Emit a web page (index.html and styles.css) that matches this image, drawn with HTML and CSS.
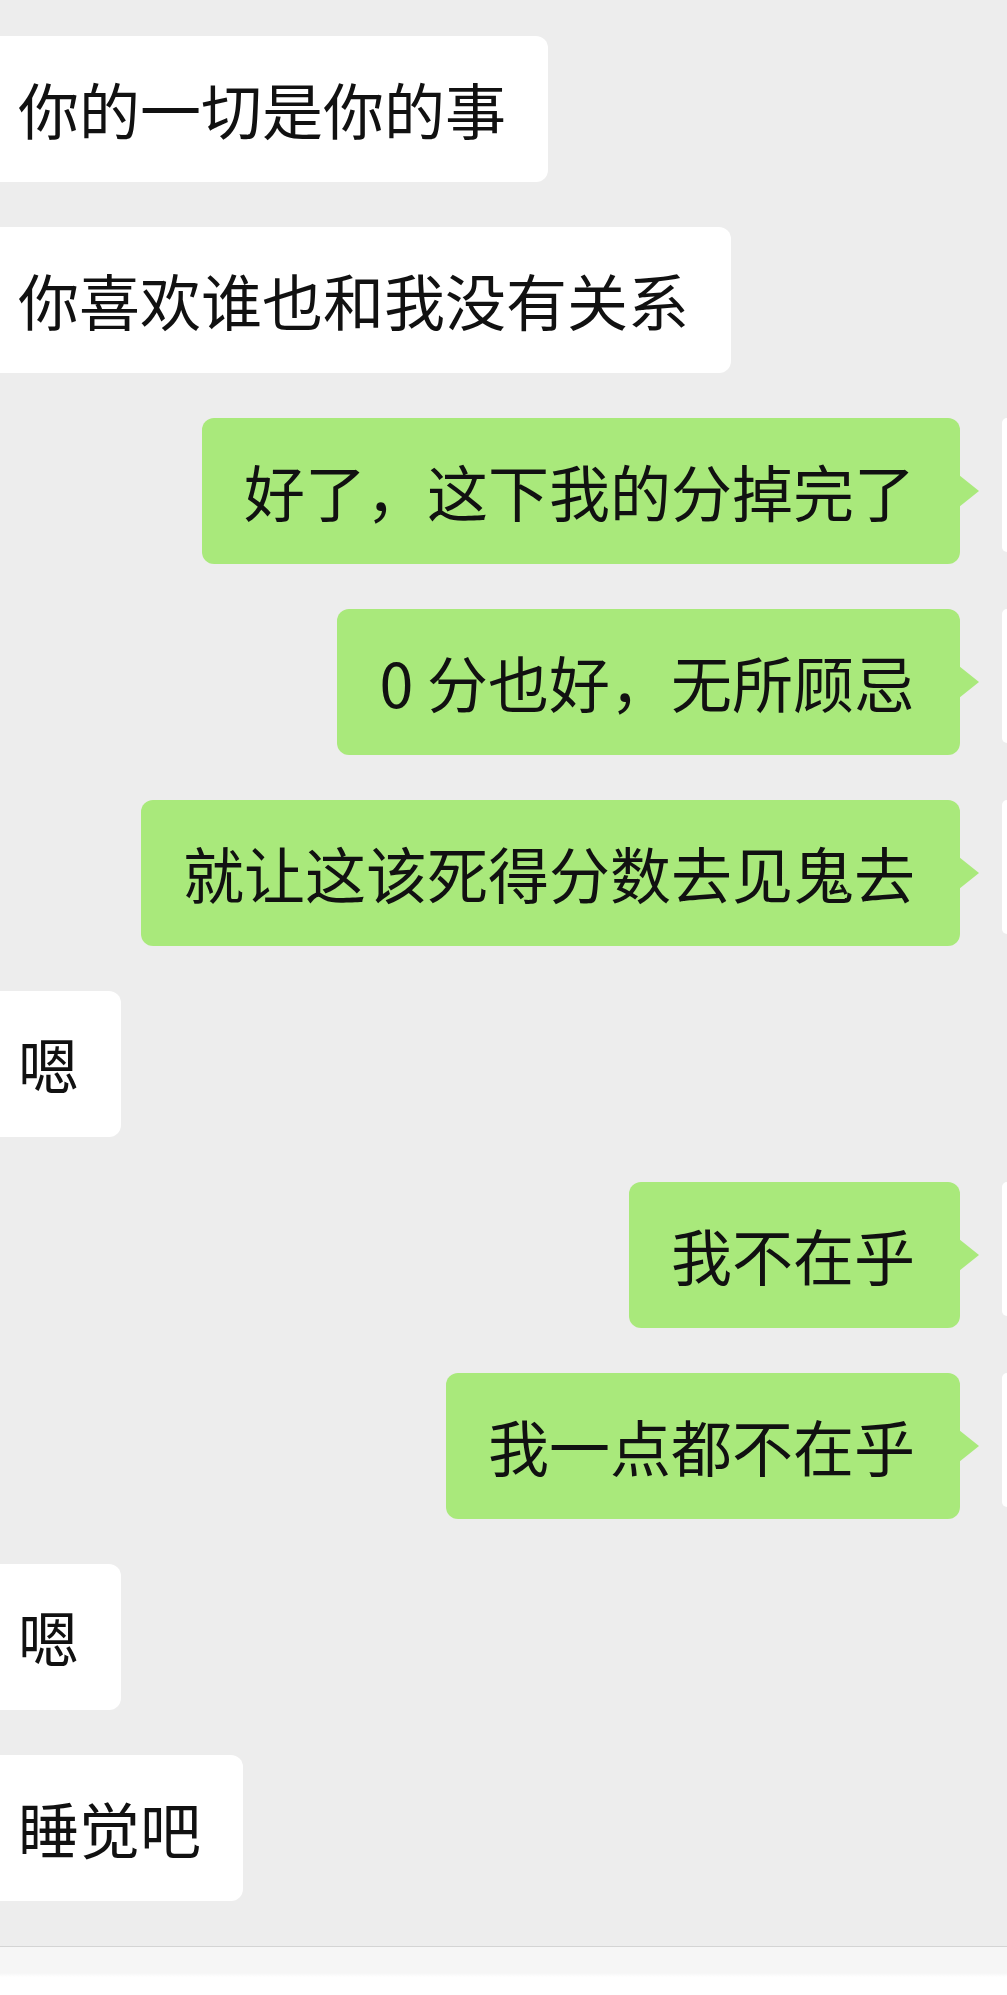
FILE: index.html
```html
<!DOCTYPE html>
<html lang="zh-CN">
<head>
    <meta charset="UTF-8">
    <meta name="viewport" content="width=device-width, initial-scale=1.0">
    <title>聊天记录</title>
    <link rel="stylesheet" href="styles.css">
</head>
<body>
    <div class="chat">
        <div class="row left">
            <div class="bubble">你的一切是你的事</div>
        </div>
        <div class="row left">
            <div class="bubble">你喜欢谁也和我没有关系</div>
        </div>
        <div class="row right">
            <div class="bubble">好了，这下我的分掉完了</div>
            <div class="avatar"></div>
        </div>
        <div class="row right">
            <div class="bubble">0 分也好，无所顾忌</div>
            <div class="avatar"></div>
        </div>
        <div class="row right">
            <div class="bubble">就让这该死得分数去见鬼去</div>
            <div class="avatar"></div>
        </div>
        <div class="row left">
            <div class="bubble">嗯</div>
        </div>
        <div class="row right">
            <div class="bubble">我不在乎</div>
            <div class="avatar"></div>
        </div>
        <div class="row right">
            <div class="bubble">我一点都不在乎</div>
            <div class="avatar"></div>
        </div>
        <div class="row left">
            <div class="bubble">嗯</div>
        </div>
        <div class="row left">
            <div class="bubble">睡觉吧</div>
        </div>
        <div class="footer"></div>
    </div>
</body>
</html>
```

FILE: styles.css
```css
body {
    margin: 0;
    height: 1995px;
    overflow: hidden;
    background-color: #ededed;
    font-family: "Noto Sans CJK SC", "Noto Sans", sans-serif;
}
.chat {
    display: flex;
    flex-direction: column;
    gap: 45px;
    padding-top: 36px;
}
.row {
    display: flex;
    align-items: center;
}
.row.left {
    justify-content: flex-start;
}
.row.right {
    justify-content: flex-end;
}
.bubble {
    position: relative;
    padding: 43px 44px;
    font-size: 61px;
    line-height: 60px;
    color: #111;
    border-radius: 12px;
    white-space: nowrap;
}
.left .bubble {
    margin-left: -26px;
    padding-right: 42px;
    background-color: #fff;
}
.right .bubble {
    margin-right: 42px;
    padding-left: 42px;
    padding-right: 45px;
    background-color: #a9e97b;
}
.right .bubble::after {
    content: "";
    position: absolute;
    right: -19px;
    top: 50%;
    margin-top: -16px;
    border-left: 20px solid #a9e97b;
    border-top: 16px solid transparent;
    border-bottom: 16px solid transparent;
}
.avatar {
    width: 5px;
    height: 134px;
    align-self: flex-start;
    background-color: #fff;
    border-radius: 8px 0 0 8px;
}
.footer {
    height: 49px;
    border-top: 1px solid #d4d4d4;
    background: linear-gradient(#f6f6f6 0, #f6f6f6 26px, #fff 30px);
}
```
